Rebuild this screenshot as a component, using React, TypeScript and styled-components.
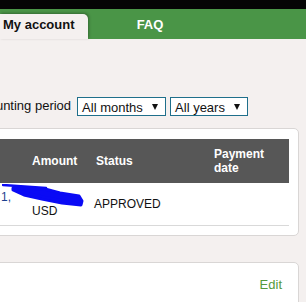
import styled, { createGlobalStyle } from "styled-components";

const GlobalStyle = createGlobalStyle`
  html, body {
    margin: 0;
    padding: 0;
    background: #f4f0ef;
    overflow: hidden;
  }
  body {
    font-family: "Liberation Sans", Arial, sans-serif;
    color: #111;
  }
`;

export default function App() {
  return (
    <>
      <GlobalStyle />
      <TopStrip />
      <NavBar>
        <Tab $active>My account</Tab>
        <Tab>FAQ</Tab>
      </NavBar>

      <Main>
        <FilterRow>
          <FilterLabel>Accounting period</FilterLabel>
          <SelectBox $width={89}>
            All months
            <Caret />
          </SelectBox>
          <SelectBox $width={78}>
            All years
            <Caret />
          </SelectBox>
        </FilterRow>

        <Card>
          <HeadRow>
            <HeadCell $pad={36}>Amount</HeadCell>
            <HeadCell $pad={6}>Status</HeadCell>
            <HeadCell $pad={4}>
              Payment
              <br />
              date
            </HeadCell>
          </HeadRow>
          <BodyRow>
            <AmountCell>
              <AmountValue>
                1,<Hidden>1</Hidden>
              </AmountValue>
              <Currency>USD</Currency>
              {/* marker scribble drawn over the amount */}
              <Scribble viewBox="0 0 84 26" width="84" height="26">
                <path className="thin" d="M1 1 C 15 2, 30 3, 44 4" />
                <path
                  className="band"
                  d="M11 4 L20 4 L43 5 L58 9 L77 12 L80 17 L79 21 L60 19 L40 15 L22 11 L11 6 Z"
                />
                <path className="thin" d="M14 6 C 30 11, 50 15, 78 20" />
              </Scribble>
            </AmountCell>
            <BodyCell $pad={4}>APPROVED</BodyCell>
            <BodyCell $pad={4} />
          </BodyRow>
        </Card>

        <SecondCard>
          <EditLink>Edit</EditLink>
        </SecondCard>
      </Main>
    </>
  );
}

const TopStrip = styled.div`
  height: 9px;
  background: #050505;
`;

const NavBar = styled.nav`
  display: flex;
  align-items: flex-end;
  height: 30px;
  background: #4a9547;
`;

const Tab = styled.div<{ $active?: boolean }>`
  box-sizing: border-box;
  height: 25px;
  padding-bottom: 3px;
  line-height: 22px;
  font-size: 13px;
  font-weight: bold;
  white-space: nowrap;
  ${({ $active }) =>
    $active
      ? `
    width: 88px;
    padding-left: 3px;
    background: #f4f0ef;
    color: #111;
    border-top-right-radius: 5px;
    box-shadow: 1px -1px 3px rgba(0, 0, 0, 0.3);
  `
      : `
    width: 124px;
    text-align: center;
    color: #fff;
  `}
`;

const Main = styled.main`
  margin: 58px 0 0 -40px;
  width: 339px;
`;

const FilterRow = styled.div`
  display: flex;
  align-items: center;
  height: 19px;
  padding-left: 7px;
`;

const FilterLabel = styled.span`
  font-size: 13px;
  line-height: 16px;
  margin-top: -2px;
  margin-right: 6px;
  white-space: nowrap;
`;

const SelectBox = styled.div<{ $width: number }>`
  box-sizing: border-box;
  display: flex;
  align-items: center;
  justify-content: space-between;
  width: ${({ $width }) => $width}px;
  height: 19px;
  margin-right: 4px;
  padding: 1px 7px 0 4px;
  border: 1px solid #1f6f8b;
  background: #fff;
  font-size: 13px;
  line-height: 17px;
  color: #111;
  white-space: nowrap;
`;

const Caret = styled.span`
  width: 0;
  height: 0;
  border-left: 3px solid transparent;
  border-right: 3px solid transparent;
  border-top: 6px solid #111;
  margin-top: -1px;
`;

const Card = styled.section`
  margin: 12px 0 0 25px;
  padding: 10px 9px 9px 10px;
  background: #fff;
  border: 1px solid #d9d6d5;
  border-radius: 5px;
`;

const HeadRow = styled.div`
  display: grid;
  grid-template-columns: 94px 120px 1fr;
  align-items: center;
  height: 44px;
  background: #575757;
`;

const HeadCell = styled.div<{ $pad: number }>`
  padding-left: ${({ $pad }) => $pad}px;
  color: #fff;
  font-size: 12px;
  font-weight: bold;
  line-height: 14px;
`;

const BodyRow = styled.div`
  display: grid;
  grid-template-columns: 94px 120px 1fr;
  align-items: center;
  height: 42px;
  border-bottom: 1px solid #d9d9d9;
`;

const BodyCell = styled.div<{ $pad: number }>`
  padding-left: ${({ $pad }) => $pad}px;
  font-size: 12px;
  line-height: 14px;
  color: #111;
`;

const AmountCell = styled.div`
  position: relative;
  font-size: 12px;
  line-height: 14px;
`;

const AmountValue = styled.div`
  padding-left: 5px;
  color: #1d3f8f;
`;

const Hidden = styled.span`
  margin-left: 45px;
  color: #222;
`;

const Currency = styled.div`
  padding-left: 36px;
  color: #111;
`;

const Scribble = styled.svg`
  position: absolute;
  left: 6px;
  top: -6px;
  fill: none;
  stroke: #0a0af5;
  stroke-linecap: round;
  stroke-linejoin: round;

  .thin {
    stroke-width: 2.5;
  }

  .band {
    fill: #0a0af5;
    stroke-width: 3;
  }
`;

const SecondCard = styled.section`
  display: flex;
  justify-content: flex-end;
  margin: 26px 0 0 25px;
  padding: 14px 16px 40px;
  background: #fff;
  border: 1px solid #d9d6d5;
  border-radius: 5px;
`;

const EditLink = styled.a`
  font-size: 13px;
  line-height: 16px;
  color: #559a3c;
  cursor: pointer;
`;
